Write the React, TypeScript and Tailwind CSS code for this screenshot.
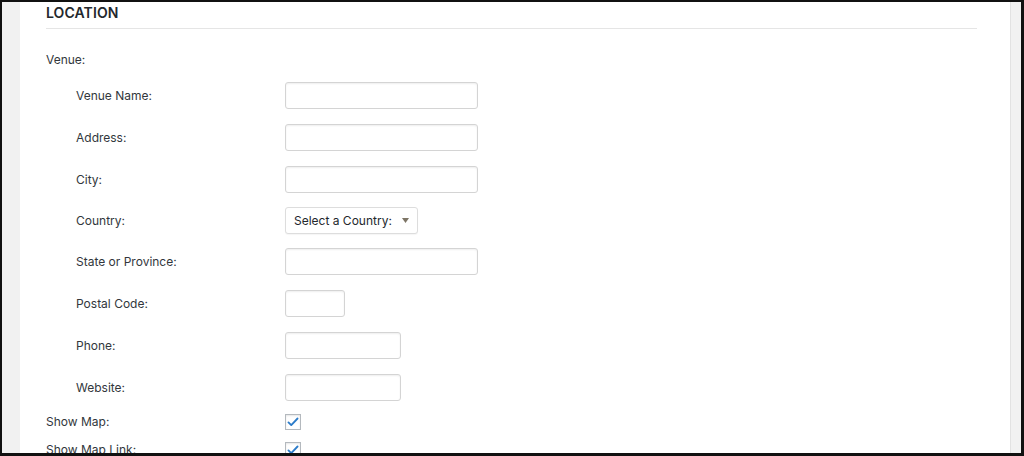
import React from 'react'

const font = { fontFamily: 'Inter, "Liberation Sans", sans-serif' }

type Field = { label: string; width: string; mt: string; select?: boolean }

const fields: Field[] = [
  { label: 'Venue Name:', width: 'w-[193px]', mt: 'mt-0' },
  { label: 'Address:', width: 'w-[193px]', mt: 'mt-[15px]' },
  { label: 'City:', width: 'w-[193px]', mt: 'mt-[15px]' },
  { label: 'Country:', width: 'w-[133px]', mt: 'mt-[14px]', select: true },
  { label: 'State or Province:', width: 'w-[193px]', mt: 'mt-[14px]' },
  { label: 'Postal Code:', width: 'w-[60px]', mt: 'mt-[15px]' },
  { label: 'Phone:', width: 'w-[116px]', mt: 'mt-[15px]' },
  { label: 'Website:', width: 'w-[116px]', mt: 'mt-[15px]' },
]

function Checkbox() {
  return (
    <span className="flex h-4 w-4 items-center justify-center border border-[#b4b9be] bg-white shadow-[inset_0_1px_2px_rgba(0,0,0,0.1)]">
      <svg width="14" height="14" viewBox="0 0 20 20">
        <path d="M3.5 10.5l4 4 9-9.5" fill="none" stroke="#2b7bc9" strokeWidth="2.6" strokeLinecap="round" strokeLinejoin="round" />
      </svg>
    </span>
  )
}

export default function App() {
  return (
    <div className="h-[456px] w-[1024px] overflow-hidden bg-[#111] pt-[2px] pl-[2px] pr-[3px] pb-[3px]" style={font}>
      <div className="flex h-full w-full overflow-hidden">
        {/* left admin strip */}
        <div className="w-[18px] shrink-0 bg-[#f1f1f1]" />

        {/* metabox */}
        <div className="flex-1 bg-white pl-[26px] pr-[33px] text-[12px] text-[#32373c]">
          <div className="h-[27px] border-b border-[#e5e5e5] pt-px">
            <h2 className="text-[14px] leading-[20px] font-semibold tracking-[0.1px] text-[#23282d]">LOCATION</h2>
          </div>

          <div className="flex h-[53px] items-center pt-[9px]">Venue:</div>

          <div className="flex flex-col">
            {fields.map((f) => (
              <div key={f.label} className={`flex h-[27px] items-center ${f.mt}`}>
                <div className="w-[239px] shrink-0 pl-[30px]">{f.label}</div>
                {f.select ? (
                  <div className={`flex h-[27px] ${f.width} items-center justify-between rounded-[3px] border border-[#ddd] bg-white pl-[8px] pr-[8px] shadow-[0_1px_1px_rgba(0,0,0,0.04)]`}>
                    <span className="text-[#23282d]">Select a Country:</span>
                    <svg width="7" height="5" viewBox="0 0 7 5">
                      <path d="M0 0h7L3.5 5z" fill="#7d7565" />
                    </svg>
                  </div>
                ) : (
                  <div className={`h-[27px] ${f.width} rounded-[3px] border border-[#d4d4d4] bg-white shadow-[inset_0_1px_2px_rgba(0,0,0,0.07)]`} />
                )}
              </div>
            ))}
          </div>

          <div className="mt-[13px] flex h-4 items-center">
            <div className="w-[239px] shrink-0">Show Map:</div>
            <Checkbox />
          </div>
          <div className="mt-[12px] flex h-4 items-center">
            <div className="w-[239px] shrink-0">Show Map Link:</div>
            <Checkbox />
          </div>
        </div>

        {/* right scrollbar strip */}
        <div className="w-[11px] shrink-0 border-l border-[#e2e2e2] bg-[#f1f1f1]" />
      </div>
    </div>
  )
}
